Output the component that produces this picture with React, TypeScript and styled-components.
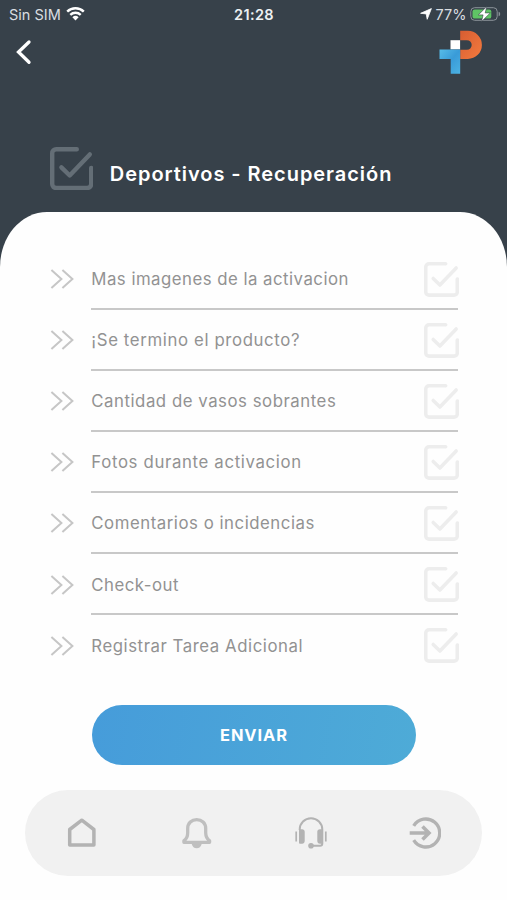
import React from "react";
import styled, { createGlobalStyle } from "styled-components";

const GlobalStyle = createGlobalStyle`
  *, *::before, *::after { box-sizing: border-box; }
  body { margin: 0; background: #37414a; font-family: Inter, "Liberation Sans", sans-serif; }
`;

const Screen = styled.div`
  width: 507px;
  height: 900px;
  display: flex;
  flex-direction: column;
  overflow: hidden;
  background: #37414a;
`;

const StatusBar = styled.header`
  height: 28px;
  padding: 0 6px 0 9px;
  display: grid;
  grid-template-columns: 1fr auto 1fr;
  align-items: center;
  color: #d9dde0;
  font-size: 14.5px;
`;

const StatusGroup = styled.div<{ $end?: boolean }>`
  display: flex;
  align-items: center;
  gap: ${(p) => (p.$end ? "3.5px" : "5px")};
  justify-content: ${(p) => (p.$end ? "flex-end" : "flex-start")};
`;

const Clock = styled.div`
  margin-right: 2px;
  font-size: 14.5px;
  font-weight: 600;
  letter-spacing: 0.35px;
  color: #eef1f3;
`;

const TopBar = styled.div`
  height: 50px;
  padding: 2px 24px 0 15px;
  display: flex;
  justify-content: space-between;
  align-items: flex-start;
`;

const BackButton = styled.button`
  margin-top: 9px;
  padding: 0;
  border: 0;
  background: none;
  height: 26px;
`;

const TitleRow = styled.div`
  height: 133.5px;
  padding: 68.5px 0 0 49.6px;
  display: flex;
  align-items: flex-start;
  gap: 16.9px;
  color: #646e76;
`;

const Title = styled.h1`
  margin: 15px 0 0;
  font-size: 20px;
  line-height: 24px;
  font-weight: 600;
  letter-spacing: 0.95px;
  white-space: nowrap;
  color: #fff;
`;

const Panel = styled.main`
  flex: 1;
  padding-top: 37px;
  background: #fefefe;
  border-radius: 47px 47px 0 0 / 55px 55px 0 0;
  display: flex;
  flex-direction: column;
`;

const TaskList = styled.ul`
  margin: 0;
  padding: 0 49.5px 0 50px;
  list-style: none;
`;

const Task = styled.li`
  height: 61.1px;
  display: flex;
  align-items: center;
  gap: 17.3px;
  color: #c6c6c6;
`;

const TaskBody = styled.div<{ $last?: boolean }>`
  flex: 1;
  height: 100%;
  padding-top: 2px;
  display: flex;
  align-items: center;
  justify-content: space-between;
  border-bottom: 2px solid ${(p) => (p.$last ? "transparent" : "#c8c8c8")};
  color: #ededed;
`;

const CheckSlot = styled.span`
  margin-right: -1px;
`;

const TaskLabel = styled.span<{ $spacing: number }>`
  font-size: 16.8px;
  font-weight: 400;
  line-height: 24px;
  letter-spacing: ${(p) => p.$spacing}px;
  color: #929292;
  white-space: nowrap;
`;

const SendButton = styled.button`
  width: 324px;
  height: 60px;
  margin: 29.2px 0 0 92px;
  padding: 0 0 1px;
  border: 0;
  border-radius: 30px;
  background: linear-gradient(100deg, #469cda, #4eabd7);
  color: #fff;
  font-family: inherit;
  font-size: 16.4px;
  font-weight: 700;
  letter-spacing: 0.95px;
  flex-shrink: 0;
`;

const BottomNav = styled.nav`
  width: 457px;
  height: 85.5px;
  margin: 24.7px 0 0 25.3px;
  border-radius: 43px;
  background: #f1f1f1;
  display: grid;
  grid-template-columns: repeat(4, 1fr);
  place-items: center;
  color: #b3b3b3;
  flex-shrink: 0;
`;

const Glyph = styled.svg`
  display: block;
  flex-shrink: 0;
  fill: none;
  stroke: currentColor;
`;

const CheckIcon = ({ size }: { size: number }) => (
  <Glyph width={size} height={size} viewBox="0 0 43.3 43.3" strokeWidth="4.4">
    <path
      strokeLinecap="round"
      d="M26.8 2.2H6.2a4 4 0 0 0-4 4V37a4 4 0 0 0 4 4h31a4 4 0 0 0 4-4V21"
    />
    <path strokeLinecap="round" strokeLinejoin="round" d="M11.4 20.4 19.7 28.5 39.8 7.4" />
  </Glyph>
);

const WifiIcon = () => (
  <Glyph width="19" height="14" viewBox="0 0 19 14" color="#fff" strokeWidth="2.4">
    <path d="M1.2 4.6a12 12 0 0 1 16.6 0M4.3 7.8a7.6 7.6 0 0 1 10.4 0" />
    <path fill="currentColor" stroke="none" d="M6.4 10.2a4.7 4.7 0 0 1 6.2 0L9.5 13.6z" />
  </Glyph>
);

const LocationIcon = () => (
  <Glyph width="12" height="12" viewBox="0 0 12 12" color="#fff" strokeLinejoin="round">
    <path fill="currentColor" strokeWidth=".8" d="M11.4.6 7.2 11.3 6.2 5.9.6 5.300z" />
  </Glyph>
);

const BatteryIcon = () => (
  <Glyph width="31" height="16" viewBox="0 0 31 16" strokeWidth="1">
    <rect x=".8" y="1.7" width="26.4" height="12.6" rx="3.8" stroke="#8b9399" />
    <rect x="2.5" y="3.4" width="18.8" height="9.2" rx="2.2" fill="#5fc465" stroke="none" />
    <path d="M28.6 5.7v4.6c1-.3 1.6-1.2 1.6-2.3s-.6-2-1.6-2.3z" fill="#8b9399" stroke="none" />
    <path d="M16.8.5 8.3 8.9h4.8L11.5 15.6l8.8-8.700h-5.100z" fill="#fff" stroke="#37414a" strokeWidth=".6" />
  </Glyph>
);

const Logo = () => (
  <Glyph width="44" height="44" viewBox="0 0 44 44">
    <defs>
      <linearGradient id="logoBlue" x1="0" y1="0" x2="1" y2="1">
        <stop offset="0" stopColor="#57bce8" />
        <stop offset=".5" stopColor="#399bd8" />
        <stop offset="1" stopColor="#4cb2e3" />
      </linearGradient>
      <linearGradient id="logoOrange" x1="0" y1="0" x2="1" y2="1">
        <stop offset="0" stopColor="#d75d32" />
        <stop offset="1" stopColor="#f47b3e" />
      </linearGradient>
    </defs>
    <g stroke="none">
      <path d="M21.2.8h7.6a14.1 14.1 0 0 1 0 28.2h-7.6v-9.2h6.7a4.8 4.8 0 0 0 0-9.6h-6.7z" fill="url(#logoOrange)" />
      <path d="M11.5 10.2h9.6v9.2h-9.6z" fill="#fff" />
      <path d="M.5 19.6h20.7v24.1h-9.5V29H.5z" fill="url(#logoBlue)" />
    </g>
  </Glyph>
);

const HomeIcon = () => (
  <Glyph width="32" height="32" viewBox="0 0 32 32" strokeWidth="3.5" strokeLinejoin="round">
    <path d="M3.7 12.5 15.8 3.2l12.1 9.3v15.4H3.7z" />
  </Glyph>
);

const BellIcon = () => (
  <Glyph width="32" height="32" viewBox="0 0 32 32" color="#bfbfbf" strokeWidth="3.3" strokeLinejoin="round">
    <path d="M2.9 25.3h25.7v-1.4c-2.5-2-3.9-4.7-3.9-8.200v-4.300C24.700 6.200 20.700 2.600 15.700 2.600s-9 3.600-9 8.800v4.300c0 3.500-1.300 6.200-3.800 8.200z" />
    <path d="M10.700 27h10c-.7 2.800-2.500 4.200-5 4.200s-4.300-1.400-5-4.200z" fill="currentColor" stroke="none" />
  </Glyph>
);

const HeadsetIcon = () => (
  <Glyph width="32" height="32" viewBox="0 0 32 32" strokeWidth="2">
    <path d="M4.7 13v-.5a11.3 11.3 0 0 1 22.6 0v14c0 1.500-.8 2.300-2.300 2.300h-9" />
    <path d="M1.200 14.500v10M30.800 14.500v10" strokeWidth="1.700" />
    <g fill="currentColor" stroke="none">
      <path d="M4 13.500c0-.8.500-1.300 1.300-1.300h1.800c1.600 0 2.600 1 2.600 2.600v9.300c0 1.600-1 2.600-2.600 2.600H5.300c-.8 0-1.300-.5-1.300-1.300zM28 13.500c0-.8-.5-1.300-1.300-1.300h-1.800c-1.600 0-2.600 1-2.600 2.600v9.300c0 1.600 1 2.600 2.600 2.600h1.800c.8 0 1.300-.5 1.300-1.300z" />
      <circle cx="16" cy="28.800" r="2.800" />
    </g>
  </Glyph>
);

const ExitIcon = () => (
  <Glyph width="32" height="32" viewBox="0 0 32 32" strokeWidth="3.3">
    <path d="M4.700 8.800a14 14 0 1 1 0 14.400" />
    <path d="M.7 16h18.600M13.500 9.500 20 16l-6.500 6.500" strokeWidth="3.600" />
  </Glyph>
);

const tasks = [
  { label: "Mas imagenes de la activacion", spacing: 0.48 },
  { label: "¡Se termino el producto?", spacing: 0.62 },
  { label: "Cantidad de vasos sobrantes", spacing: 0.53 },
  { label: "Fotos durante activacion", spacing: 0.65 },
  { label: "Comentarios o incidencias", spacing: 0.53 },
  { label: "Check-out", spacing: 0.5 },
  { label: "Registrar Tarea Adicional", spacing: 0.55 },
];

export default function App() {
  return (
    <Screen>
      <GlobalStyle />
      <StatusBar>
        <StatusGroup>
          Sin SIM
          <WifiIcon />
        </StatusGroup>
        <Clock>21:28</Clock>
        <StatusGroup $end>
          <LocationIcon />
          77%
          <BatteryIcon />
        </StatusGroup>
      </StatusBar>
      <TopBar>
        <BackButton aria-label="Volver">
          <Glyph width="17" height="26" viewBox="0 0 17 26" color="#fff" strokeWidth="3.3" strokeLinecap="round">
            <path d="M14 3 3.500 13 14 23.300" />
          </Glyph>
        </BackButton>
        <Logo />
      </TopBar>
      <TitleRow>
        <CheckIcon size={43.3} />
        <Title>Deportivos - Recuperación</Title>
      </TitleRow>
      <Panel>
        <TaskList>
          {tasks.map((task, i) => (
            <Task key={task.label}>
              <Glyph width="24" height="20" viewBox="0 0 24 20" strokeWidth="2">
                <path d="M1.400 1 11.400 10 1.400 19M12.400 1l10 9-10 9" />
              </Glyph>
              <TaskBody $last={i === tasks.length - 1}>
                <TaskLabel $spacing={task.spacing}>{task.label}</TaskLabel>
                <CheckSlot>
                  <CheckIcon size={35} />
                </CheckSlot>
              </TaskBody>
            </Task>
          ))}
        </TaskList>
        <SendButton>ENVIAR</SendButton>
        <BottomNav>
          <HomeIcon />
          <BellIcon />
          <HeadsetIcon />
          <ExitIcon />
        </BottomNav>
      </Panel>
    </Screen>
  );
}
